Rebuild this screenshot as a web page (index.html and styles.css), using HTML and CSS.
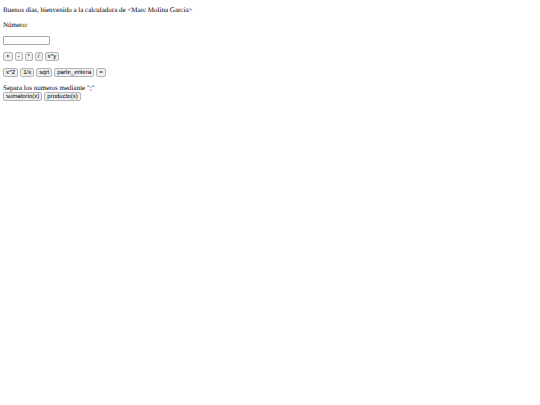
FILE: index.html
```html
<!DOCTYPE html>
<html lang="es">
<head>
<meta charset="utf-8">
<title>Calculadora</title>
<link rel="stylesheet" href="styles.css">
</head>
<body>
<main class="calculator">
<p class="text">Buenos días, bienvenido a la calculadora de &lt;Marc Molina Garcia&gt;</p>
<label class="text" for="numero">Número:</label>
<input class="field" id="numero" type="text">
<div class="row">
<button type="button">+</button>
<button type="button">-</button>
<button type="button">*</button>
<button type="button">/</button>
<button type="button">x^y</button>
</div>
<div class="row">
<button type="button">x^2</button>
<button type="button">1/x</button>
<button type="button">sqrt</button>
<button type="button">parte_entera</button>
<button type="button">=</button>
</div>
<section>
<p class="text">Separa los numeros mediante ";"</p>
<div class="row">
<button type="button">sumatorio(x)</button>
<button type="button">producto(x)</button>
</div>
</section>
</main>
</body>
</html>
```
FILE: styles.css
```css
body {
  margin: 0;
  background: #fff;
  color: #000;
  font-family: "Liberation Serif", "Times New Roman", serif;
  font-size: 7px;
  text-rendering: geometricPrecision;
}

.calculator {
  display: flex;
  flex-direction: column;
  align-items: flex-start;
  gap: 7px;
  padding: 6px 3px;
}

.text {
  margin: 0;
  line-height: 8px;
}

.field {
  box-sizing: border-box;
  width: 47px;
  height: 9px;
  padding: 0 1px;
  border: 1px solid #a8a8a8;
  border-radius: 1px;
  font: 6px "Liberation Sans", Arial, sans-serif;
}

.row {
  display: flex;
  gap: 2px;
}

button {
  box-sizing: border-box;
  height: 9px;
  padding: 1px 2px 0;
  border: 1px solid #b4b4b4;
  border-radius: 2px;
  background: #efefef;
  color: #000;
  font: 6px/6px "Liberation Sans", Arial, sans-serif;
  text-rendering: inherit;
}
```
